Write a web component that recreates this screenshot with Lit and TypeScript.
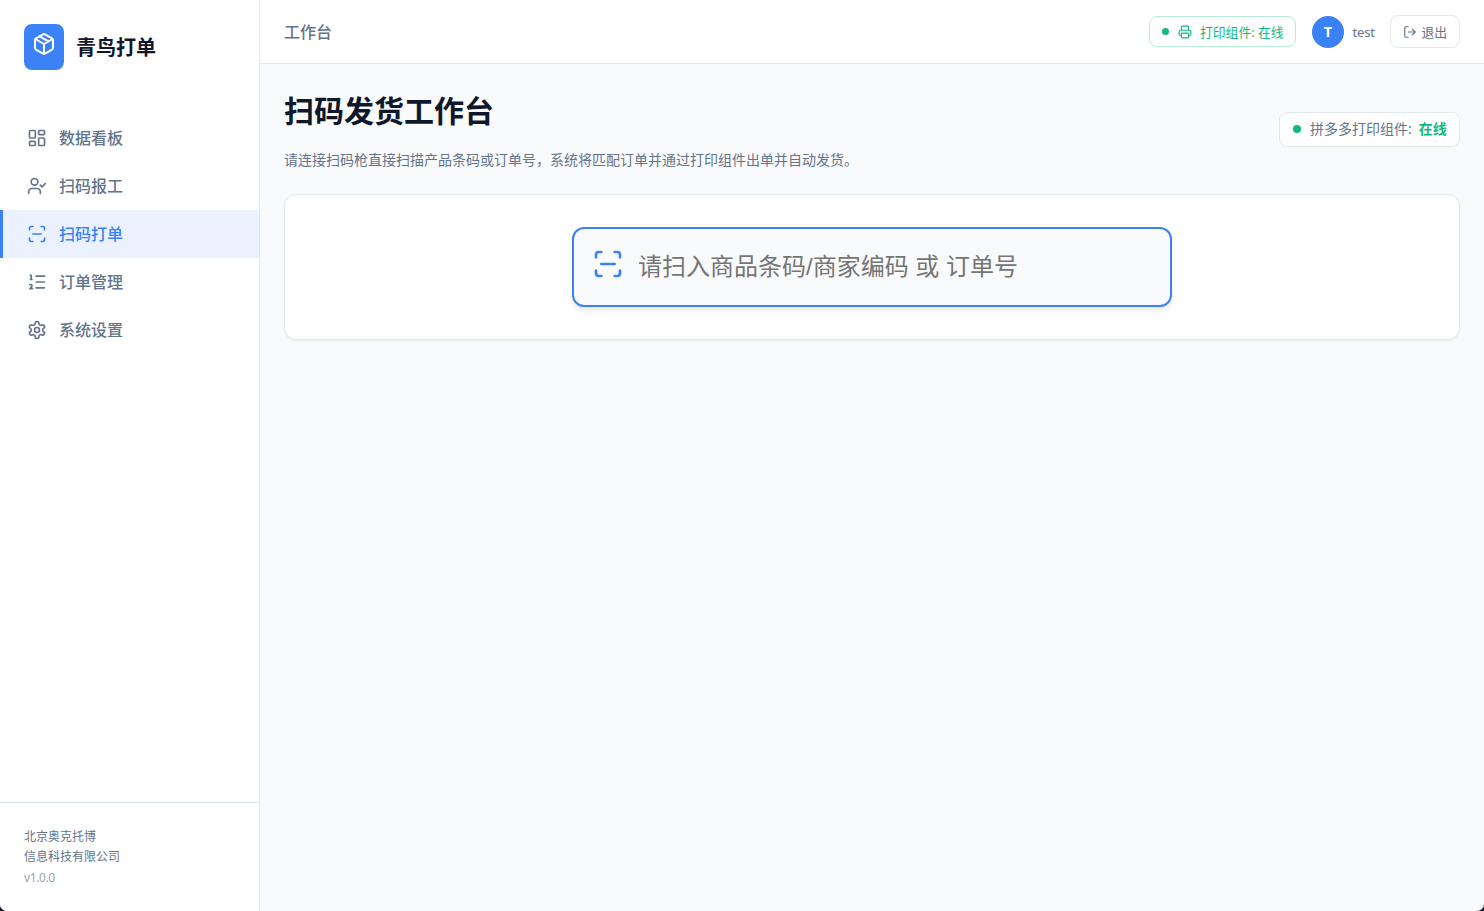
import { LitElement, html, css, svg } from "lit";
import { customElement } from "lit/decorators.js";

const nav = [
  { label: "数据看板", icon: svg`<rect x="3" y="3" width="7" height="9" rx="1"/><rect x="14" y="3" width="7" height="5" rx="1"/><rect x="14" y="12" width="7" height="9" rx="1"/><rect x="3" y="16" width="7" height="5" rx="1"/>` },
  { label: "扫码报工", icon: svg`<path d="M16 21v-2a4 4 0 0 0-4-4H6a4 4 0 0 0-4 4v2"/><circle cx="9" cy="7" r="4"/><path d="m16 11 2 2 4-4"/>` },
  { label: "扫码打单", active: true, icon: svg`<path d="M3 7V5a2 2 0 0 1 2-2h2M17 3h2a2 2 0 0 1 2 2v2M21 17v2a2 2 0 0 1-2 2h-2M7 21H5a2 2 0 0 1-2-2v-2M7 12h10"/>` },
  { label: "订单管理", icon: svg`<path d="M11 5h10M11 12h10M11 19h10M4 4h1v5M4 9h2M6.500 20H3.400c0-1 2.600-1.925 2.600-3.500a1.500 1.500 0 0 0-2.600-1.020"/>` },
  { label: "系统设置", icon: svg`<path d="M12.220 2h-.440a2 2 0 0 0-2 2v.180a2 2 0 0 1-1 1.730l-.430.250a2 2 0 0 1-2 0l-.150-.080a2 2 0 0 0-2.730.730l-.220.380a2 2 0 0 0 .730 2.730l.150.100a2 2 0 0 1 1 1.720v.510a2 2 0 0 1-1 1.740l-.150.090a2 2 0 0 0-.730 2.730l.220.380a2 2 0 0 0 2.730.730l.150-.080a2 2 0 0 1 2 0l.430.250a2 2 0 0 1 1 1.730V20a2 2 0 0 0 2 2h.440a2 2 0 0 0 2-2v-.180a2 2 0 0 1 1-1.730l.430-.250a2 2 0 0 1 2 0l.150.080a2 2 0 0 0 2.730-.730l.220-.390a2 2 0 0 0-.730-2.730l-.150-.080a2 2 0 0 1-1-1.740v-.500a2 2 0 0 1 1-1.740l.150-.090a2 2 0 0 0 .730-2.730l-.220-.380a2 2 0 0 0-2.730-.730l-.150.080a2 2 0 0 1-2 0l-.430-.250a2 2 0 0 1-1-1.730V4a2 2 0 0 0-2-2z"/><circle cx="12" cy="12" r="3"/>` },
];

const icon = (content: unknown, cls: string) =>
  html`<svg class=${"icon " + cls} viewBox="0 0 24 24">${content}</svg>`;

@customElement("app-root")
export class AppRoot extends LitElement {
  static styles = css`
    :host { display: block; height: 100vh; overflow: hidden; background: #0f172a; font-family: "Noto Sans", "Noto Sans CJK SC", sans-serif; color: #0f172a; }
    * { box-sizing: border-box; }
    .app { display: flex; height: 100%; background: #f8fafc; border-radius: 0 0 7px 7px; overflow: hidden; }
    .icon { display: block; flex: none; fill: none; stroke: currentColor; stroke-width: 2; stroke-linecap: round; stroke-linejoin: round; }
    .side { width: 260px; flex: none; display: flex; flex-direction: column; background: #fff; border-right: 1px solid #e2e8f0; }
    .brand { display: flex; align-items: center; gap: 12px; padding: 24px; height: 94px; }
    .logo { width: 40px; height: 46px; display: flex; justify-content: center; padding-top: 8px; border-radius: 8px; background: #3b82f6; color: #fff; }
    .i24 { width: 24px; height: 24px; }
    .i20 { width: 20px; height: 20px; }
    .i14 { width: 14px; height: 14px; }
    .i32 { width: 32px; height: 32px; }
    .name { font-size: 20px; font-weight: 700; line-height: 30px; padding-top: 2px; }
    .nav { flex: 1; padding-top: 20px; }
    .item { display: flex; align-items: center; gap: 12px; height: 48px; padding-left: 24px; border-left: 3px solid transparent; color: #64748b; font-size: 16px; line-height: 24px; font-weight: 500; }
    .item span { padding-bottom: 1px; }
    .active { color: #3b82f6; background: #ebf1fe; border-left-color: #3b82f6; }
    .foot { height: 109px; border-top: 1px solid #e2e8f0; padding: 24px; font-size: 12px; line-height: 20px; color: #64748b; }
    .ver { color: #94a3b8; letter-spacing: -0.400px; line-height: 21px; }
    .main { flex: 1; min-width: 0; display: flex; flex-direction: column; }
    .top { height: 64px; display: flex; align-items: center; justify-content: space-between; padding: 0 24px; background: #fff; border-bottom: 1px solid #e2e8f0; color: #64748b; }
    .crumb { font-size: 16px; line-height: 24px; font-weight: 500; padding-top: 1px; }
    .tools { display: flex; align-items: center; }
    .chip { display: flex; align-items: center; width: 147px; height: 31px; padding-left: 12.400px; border: 1px solid #b7ecd9; border-radius: 8px; color: #10b981; font-size: 12.800px; white-space: nowrap; }
    .dot { width: 7px; height: 7px; border-radius: 50%; background: #10b981; flex: none; }
    .chip .icon { margin: 0 8px 0 8.600px; }
    .avatar { width: 32px; height: 32px; margin: 0 8px 0 16px; border-radius: 50%; display: grid; place-items: center; background: #3b82f6; color: #fff; font-size: 14.400px; font-weight: 700; }
    .user { font-size: 13px; line-height: 20px; width: 23px; padding-left: 0.500px; letter-spacing: -0.200px; white-space: nowrap; }
    .exit { display: flex; align-items: center; gap: 4.500px; width: 70px; height: 33px; padding-left: 12px; margin-left: 15px; border: 1px solid #e2e8f0; border-radius: 8px; font-size: 12.800px; }
    .content { padding: 24px; }
    .head { display: flex; align-items: center; justify-content: space-between; height: 82px; margin-bottom: 24px; }
    .title { margin: 0; font-size: 30px; line-height: 45px; font-weight: 700; }
    .sub { margin: 16px 0 0; font-size: 14px; line-height: 21px; color: #64748b; }
    .status { display: flex; align-items: center; width: 181px; height: 35px; padding-left: 13px; border: 1px solid #e2e8f0; border-radius: 8px; background: #fff; color: #64748b; font-size: 14px; line-height: 20px; white-space: nowrap; }
    .status .dot { width: 8px; height: 8px; margin-right: 9px; }
    .online { margin-left: 7px; font-weight: 700; color: #10b981; }
    .card { display: flex; justify-content: center; padding: 32px; height: 146px; background: #fff; border: 1px solid #e2e8f0; border-radius: 12px; box-shadow: 0 1px 3px rgba(0,0,0,.05); }
    .field { display: flex; width: 600px; height: 80px; align-items: center; padding: 0 18px; gap: 14px; border: 2px solid #3b82f6; border-radius: 12px; background: #f8fafc; box-shadow: 0 4px 6px -1px rgba(0,0,0,.1); color: #3b82f6; }
    .field .icon { margin-top: -6px; }
    .input { flex: 1; min-width: 0; border: 0; outline: 0; padding: 0; background: none; font: 24px "Liberation Sans", "Noto Sans CJK SC", sans-serif; }
    .input::placeholder { color: #757575; }
  `;

  render() {
    return html`<div class="app">
      <aside class="side">
        <div class="brand">
          <div class="logo">${icon(svg`<path d="m7.500 4.270 9 5.150M21 8a2 2 0 0 0-1-1.730l-7-4a2 2 0 0 0-2 0l-7 4A2 2 0 0 0 3 8v8a2 2 0 0 0 1 1.730l7 4a2 2 0 0 0 2 0l7-4A2 2 0 0 0 21 16ZM3.300 7l8.700 5 8.700-5M12 22V12"/>`, "i24")}</div>
          <div class="name">青鸟打单</div>
        </div>
        <nav class="nav">
          ${nav.map((n) => html`<div class=${n.active ? "item active" : "item"}>${icon(n.icon, "i20")}<span>${n.label}</span></div>`)}
        </nav>
        <div class="foot"><div>北京奥克托博</div><div>信息科技有限公司</div><div class="ver">v1.0.0</div></div>
      </aside>
      <main class="main">
        <header class="top">
          <div class="crumb">工作台</div>
          <div class="tools">
            <div class="chip"><span class="dot"></span>${icon(svg`<path d="M6 18H4a2 2 0 0 1-2-2v-5a2 2 0 0 1 2-2h16a2 2 0 0 1 2 2v5a2 2 0 0 1-2 2h-2M6 9V3a1 1 0 0 1 1-1h10a1 1 0 0 1 1 1v6"/><rect x="6" y="14" width="12" height="8" rx="1"/>`, "i14")}<span>打印组件: 在线</span></div>
            <div class="avatar">T</div>
            <span class="user">test</span>
            <div class="exit">${icon(svg`<path d="M9 21H5a2 2 0 0 1-2-2V5a2 2 0 0 1 2-2h4M16 17l5-5-5-5M21 12H9"/>`, "i14")}<span>退出</span></div>
          </div>
        </header>
        <section class="content">
          <div class="head">
            <div><h1 class="title">扫码发货工作台</h1><p class="sub">请连接扫码枪直接扫描产品条码或订单号，系统将匹配订单并通过打印组件出单并自动发货。</p></div>
            <div class="status"><span class="dot"></span><span>拼多多打印组件:</span><span class="online">在线</span></div>
          </div>
          <div class="card">
            <label class="field">${icon(nav[2].icon, "i32")}<input class="input" placeholder="请扫入商品条码/商家编码 或 订单号" /></label>
          </div>
        </section>
      </main>
    </div>`;
  }
}
